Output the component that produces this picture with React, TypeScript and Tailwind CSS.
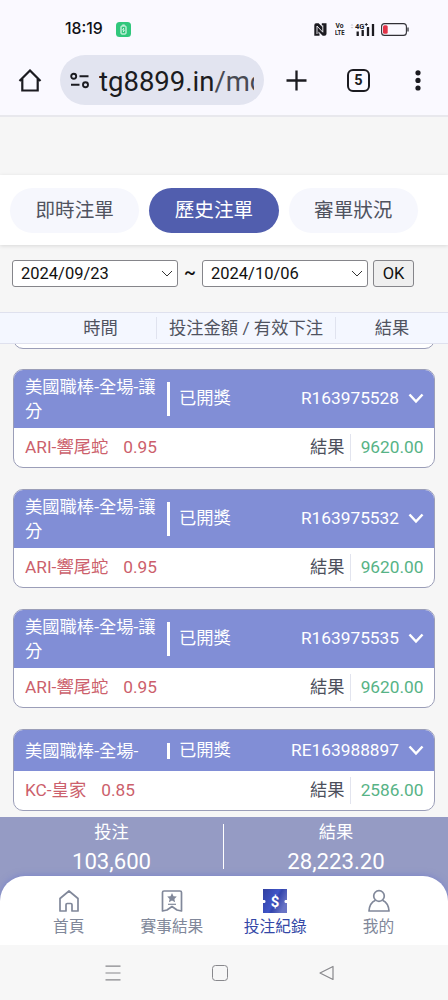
import type { ReactNode } from "react";

const tabs = ["即時注單", "歷史注單", "審單狀況"];

const bets = [
    { league: "美國職棒-全場-讓分", id: "R163975528", team: "ARI-響尾蛇", odds: "0.95", result: "9620.00" },
    { league: "美國職棒-全場-讓分", id: "R163975532", team: "ARI-響尾蛇", odds: "0.95", result: "9620.00" },
    { league: "美國職棒-全場-讓分", id: "R163975535", team: "ARI-響尾蛇", odds: "0.95", result: "9620.00" },
    { league: "美國職棒-全場-", id: "RE163988897", team: "KC-皇家", odds: "0.85", result: "2586.00" },
];

function StatusBar() {
    return (
        <div className="flex h-12 items-center pt-[10px] pl-[65px]">
            <div className="w-[51px] font-['Inter'] text-[15.800px] leading-5 font-medium text-[#111116]">18:19</div>
            <svg width="15" height="15" viewBox="0 0 15 15">
                <rect width="15" height="15" rx="3.5" fill="#30c77c" />
                <rect x="5" y="4" width="5" height="8" rx="0.8" fill="none" stroke="#fff" strokeWidth="1" />
                <path d="M6.3 3h2.4M7.8 6 6.7 8h1.6L7.2 10" fill="none" stroke="#fff" strokeWidth="0.8" />
            </svg>
            <svg className="ml-[183px]" width="13" height="13" viewBox="0 0 13 13">
                <path d="M2 .3h2.600l4 4V2.600H7.800V.3h4.700v10.500q0 2-2 2H8.700L4.500 8.600v1.800h1v2.400H.3V2.200Q.3.3 2 .3Z" fill="#1b1b20" />
                <path d="M3 11V3l5.800 6.200V2.300" fill="none" stroke="#faf9ff" strokeWidth="0.900" />
            </svg>
            <svg className="ml-[8px]" width="10" height="14" viewBox="0 0 10 14" fontFamily="Roboto" fontSize="7.500" fontWeight="700" fill="#1b1b20">
                <text x="0.500" y="6" textLength="8" lengthAdjust="spacingAndGlyphs">Vo</text>
                <text x="0" y="13.300" textLength="9.500" lengthAdjust="spacingAndGlyphs">LTE</text>
            </svg>
            <svg className="ml-[5px]" width="25" height="15" viewBox="0 0 25 15">
                <path d="M.5 3.500 2 2l1.500 1.500ZM.5 5 2 6.500 3.500 5Z" fill="#c9c9cf" />
                <text x="5" y="6.600" fontFamily="Roboto" fontSize="7.500" fontWeight="700" fill="#1b1b20">4G</text>
                <path d="M14.800 2.500h3M16.300 1v3" stroke="#1b1b20" strokeWidth="0.900" />
                <path d="M7.700 14V9.500M12.700 14V8M18 14V5M23 14V2" stroke="#1b1b20" strokeWidth="2.300" />
            </svg>
            <svg className="ml-[6px]" width="28" height="13" viewBox="0 0 28 13">
                <rect x="0.600" y="0.600" width="24.800" height="11.800" rx="3" fill="none" stroke="#303035" strokeWidth="1.100" />
                <rect x="2" y="2.200" width="4.700" height="8.600" rx="1.500" fill="#e23347" />
                <path d="M27 4.500v4" stroke="#303035" strokeWidth="1.300" />
            </svg>
        </div>
    );
}

function Toolbar() {
    return (
        <div className="flex h-[67px] items-start pt-[7px]">
            <svg className="mt-[14px] ml-[18px]" width="24" height="23" viewBox="0 0 24 23" fill="none" stroke="#1b1b20" strokeWidth="2.200">
                <path d="M1.500 12 12 1.500 22.500 12M4.300 9.800v11.700h15.400V9.800" />
            </svg>
            <div className="ml-[18px] flex h-[50px] w-[204px] items-center overflow-hidden rounded-full bg-[#e2e4f0] pl-[10px]">
                <svg className="shrink-0" width="20" height="17" viewBox="0 0 20 17" fill="none" stroke="#1b1b20" strokeWidth="1.900">
                    <circle cx="3.700" cy="4.300" r="2.500" />
                    <path d="M9.500 4.300h9M1 12.800h8.500" />
                    <circle cx="15.500" cy="12.800" r="2.500" />
                </svg>
                <div className="ml-[9px] w-[155px] overflow-hidden pt-[3px] font-['Roboto'] text-[27.500px] leading-[50px] whitespace-nowrap text-[#1b1b20]">
                    tg8899.in<span className="text-[#484a54]">/mo</span>
                </div>
            </div>
            <svg className="mt-[15px] ml-[22px]" width="21" height="21" viewBox="0 0 21 21" stroke="#1b1b20" strokeWidth="2.300">
                <path d="M.5 10.500h20M10.500.5v20" />
            </svg>
            <div className="mt-[14px] ml-[40px] flex size-[23px] items-center justify-center rounded-[6px] border-2 border-[#1b1b20] font-['Roboto'] text-[14.500px] font-bold text-[#1b1b20]">
                5
            </div>
            <svg className="mt-[15px] ml-[45px]" width="6" height="21" viewBox="0 0 6 21" fill="#1b1b20">
                <circle cx="3" cy="2.800" r="2.600" />
                <circle cx="3" cy="10.400" r="2.600" />
                <circle cx="3" cy="18" r="2.600" />
            </svg>
        </div>
    );
}

function DateSelect({ value }: { value: string }) {
    return (
        <div className="flex h-[27px] w-[166px] items-center justify-between rounded-[3px] border border-[#85858a] bg-white pr-[4px] pl-2 text-[16.500px] text-[#111]">
            <span className="pt-[2px]">{value}</span>
            <svg width="12" height="8" viewBox="0 0 12 8" fill="none" stroke="#333" strokeWidth="1">
                <path d="m1 1 5 5 5-5" />
            </svg>
        </div>
    );
}

function BetCard({ bet }: { bet: (typeof bets)[number] }) {
    const short = bet.league.endsWith("-");

    return (
        <div className="mb-[21px] overflow-hidden rounded-[10px] border border-[#9b9eb8] bg-white">
            <div className={short ? "flex h-[41px] items-center bg-[#818ed6] pr-[10px] pl-[11px] text-white" : "flex h-[58px] items-center bg-[#818ed6] pr-[10px] pb-px pl-[11px] text-white"}>
                <div className="w-[142px] leading-6">
                    <div className="w-[134px]">{bet.league}</div>
                </div>
                <div className={short ? "h-[16px] w-[3px] bg-white" : "h-[34px] w-[3px] bg-white"} />
                <div className="ml-[9px]">已開獎</div>
                <div className="ml-auto">{bet.id}</div>
                <svg className="ml-[9px]" width="16" height="11" viewBox="0 0 16 11" fill="none" stroke="#fff" strokeWidth="2.500">
                    <path d="m1.500 1.500 6.500 7 6.500-7" />
                </svg>
            </div>
            <div className="flex h-[39px] items-center pr-[10.500px] pl-[11px]">
                <div className="text-[#cc5f6c]">{bet.team}</div>
                <div className="ml-[15px] text-[#cc5f6c]">{bet.odds}</div>
                <div className="ml-auto text-[#4c4f5c]">結果</div>
                <div className="mr-[10px] ml-[5px] h-[27px] w-px bg-[#e2e4ee]" />
                <div className="text-[#57b386]">{bet.result}</div>
            </div>
        </div>
    );
}

function NavItem({ label, active, children }: { label: string; active?: boolean; children: ReactNode }) {
    return (
        <div className={active ? "flex w-[103.300px] flex-col items-center text-[#3347a6]" : "flex w-[103.300px] flex-col items-center text-[#81889a]"}>
            <div className="flex h-[26px] items-center">{children}</div>
            <div className="pt-px text-[15.700px] leading-[24px]">{label}</div>
        </div>
    );
}

export default function App() {
    return (
        <div className="flex h-[1000px] w-[448px] flex-col overflow-hidden bg-[#f6f6f6] font-['Roboto','Noto_Sans_CJK_TC',sans-serif] text-[17.300px]">
            <header className="h-[117px] shrink-0 border-b-2 border-[#e8e8ed] bg-[#faf9ff]">
                <StatusBar />
                <Toolbar />
            </header>

            <div className="mt-[58px] flex h-[70px] shrink-0 items-center gap-[10px] bg-white pl-[10px] shadow-[0_1px_4px_rgba(0,0,0,0.12)]">
                {tabs.map((tab, i) => (
                    <div
                        key={tab}
                        className={
                            i === 1
                                ? "flex h-[45px] w-[129.300px] items-center justify-center rounded-full bg-[#515eae] pt-[2px] text-[19.600px] text-white"
                                : "flex h-[45px] w-[129.300px] items-center justify-center rounded-full bg-[#f6f7fd] pt-[2px] text-[19.600px] text-[#50535f]"
                        }
                    >
                        {tab}
                    </div>
                ))}
            </div>

            <div className="flex h-[67px] shrink-0 items-start pt-[15px] pl-[12px]">
                <DateSelect value="2024/09/23" />
                <span className="w-[24px] text-center text-[18px] leading-[25px] font-medium text-[#111]">~</span>
                <DateSelect value="2024/10/06" />
                <button className="ml-[5px] h-[27px] w-[41px] rounded-[3px] border border-[#85858a] bg-[#efefef] text-[16.500px] leading-[24px] text-[#111]">OK</button>
            </div>

            <div className="flex h-[32px] shrink-0 items-center border-y border-[#dfe1ee] bg-[#f4f7ff] text-[#50535f]">
                <div className="w-[156px] pt-px pl-[45px] text-center">時間</div>
                <div className="flex h-[22px] w-[180px] items-center justify-center border-x border-[#e0e3ef] pt-px whitespace-nowrap">投注金額 / 有效下注</div>
                <div className="w-[112px] pt-px text-center">結果</div>
            </div>

            <main className="h-[473px] shrink-0 overflow-hidden px-[13px]">
                <div className="-mt-[16px] mb-[20px] h-[21px] rounded-b-[10px] border border-[#9b9eb8] bg-white" />
                {bets.map((bet) => (
                    <BetCard key={bet.id} bet={bet} />
                ))}
            </main>

            <div className="h-[128px] shrink-0 bg-[#959bc4]">
                <div className="flex h-[59px] text-white">
                    <div className="w-[223px] pt-[2px] text-center">
                        <div className="leading-[26px]">投注</div>
                        <div className="text-[22.200px] leading-[32px]">103,600</div>
                    </div>
                    <div className="mt-[7px] h-[45px] w-px bg-white" />
                    <div className="w-[224px] pt-[2px] text-center">
                        <div className="leading-[26px]">結果</div>
                        <div className="text-[22.200px] leading-[32px]">28,223.20</div>
                    </div>
                </div>
                <nav className="flex h-[69px] rounded-t-[25px] bg-white pt-[12px] pl-[17px] shadow-[0_-1px_6px_rgba(110,122,205,0.6)]">
                    <NavItem label="首頁">
                        <svg width="22" height="24" viewBox="0 0 22 24" fill="none" stroke="currentColor" strokeWidth="1.700" strokeLinejoin="round">
                            <path d="M2 9.500 11 2l9 7.500V22h-6v-6.300q0-1.200-1.200-1.200H9.200Q8 14.500 8 15.700V22H2Z" />
                        </svg>
                    </NavItem>
                    <NavItem label="賽事結果">
                        <svg width="22" height="24" viewBox="0 0 22 24" fill="none" stroke="currentColor" strokeWidth="1.700" strokeLinejoin="round">
                            <path d="M1.500 3.500q0-1.500 1.500-1.500h16q1.500 0 1.500 1.500V22L16 21l-5-3.500L6 21l-4.500 1Z" />
                            <path d="m11 4 1.500 3.200 3.300.4-2.400 2.300.7 3.300L11 11.600l-3.100 1.600.7-3.300-2.400-2.300 3.300-.4Z" fill="currentColor" stroke="none" />
                            <path d="M7 15.300h8" strokeWidth="1.200" />
                        </svg>
                    </NavItem>
                    <NavItem label="投注紀錄" active>
                        <svg width="24" height="24" viewBox="0 0 24 24">
                            <defs>
                                <linearGradient id="ticket" x1="0" y1="0" x2="1" y2="0.500">
                                    <stop offset="0" stopColor="#303f9f" />
                                    <stop offset="0.550" stopColor="#4055c8" />
                                    <stop offset="0.650" stopColor="#3345ad" />
                                    <stop offset="1" stopColor="#6974c5" />
                                </linearGradient>
                            </defs>
                            <path d="M0 0h24v11h-1.500a1.600 1.600 0 0 0 0 3H24v10H0V14h1.500a1.600 1.600 0 0 0 0-3H0Z" fill="url(#ticket)" />
                            <text x="12" y="17.500" textAnchor="middle" fontFamily="Roboto" fontSize="15" fontWeight="700" fill="#fff">$</text>
                        </svg>
                    </NavItem>
                    <NavItem label="我的">
                        <svg width="22" height="24" viewBox="0 0 22 24" fill="none" stroke="currentColor" strokeWidth="1.700" strokeLinejoin="round">
                            <circle cx="11" cy="7" r="5.300" />
                            <path d="M7.500 11.300Q1.500 14 1 22h20q-.5-8-6.500-10.700" />
                        </svg>
                    </NavItem>
                </nav>
            </div>

            <footer className="flex h-[55px] shrink-0 items-center bg-[#f7f7f7] pl-[105px]">
                <svg width="16" height="16" viewBox="0 0 16 16" stroke="#88888c" strokeWidth="1.200">
                    <path d="M.5 1.200h15M.5 8h15M.5 14.800h15" />
                </svg>
                <div className="ml-[91px] size-[16px] rounded-[3.500px] border-[1.200px] border-[#88888c]" />
                <svg className="ml-[91px]" width="15" height="16" viewBox="0 0 15 16" fill="none" stroke="#88888c" strokeWidth="1.200" strokeLinejoin="round">
                    <path d="M14 1.500v13L1 8Z" />
                </svg>
            </footer>
        </div>
    );
}
